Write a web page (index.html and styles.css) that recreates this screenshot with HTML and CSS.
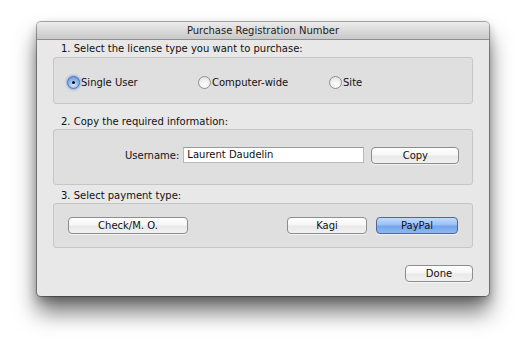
FILE: index.html
```html
<!DOCTYPE html>
<html>
<head>
<meta charset="utf-8">
<link rel="stylesheet" href="styles.css">
</head>
<body>
<div class="window">
  <div class="titlebar">Purchase Registration Number</div>
  <div class="content">
    <div class="label l1">1. Select the license type you want to purchase:</div>
    <div class="group g1">
      <div class="radio r-single"><span class="dot on"></span>Single User</div>
      <div class="radio r-comp"><span class="dot"></span>Computer-wide</div>
      <div class="radio r-site"><span class="dot"></span>Site</div>
    </div>
    <div class="label l2">2. Copy the required information:</div>
    <div class="group g2">
      <span class="ulabel">Username:</span>
      <div class="field">Laurent Daudelin</div>
      <div class="btn b-copy">Copy</div>
    </div>
    <div class="label l3">3. Select payment type:</div>
    <div class="group g3">
      <div class="btn b-check">Check/M. O.</div>
      <div class="spacer"></div>
      <div class="btn b-kagi">Kagi</div>
      <div class="btn b-paypal default">PayPal</div>
    </div>
    <div class="footer">
      <div class="btn b-done">Done</div>
    </div>
  </div>
</div>
</body>
</html>
```
FILE: styles.css
```css
html, body {
  margin: 0;
  padding: 0;
  background: #ffffff;
}
body {
  min-height: 342px;
  padding-top: 22px;
  box-sizing: border-box;
  font-family: "DejaVu Sans", "Liberation Sans", sans-serif;
  font-size: 10px;
  color: #111;
}
.window {
  margin: 0 0 0 37px;
  width: 452px;
  height: 274px;
  background: #e8e8e8;
  border-radius: 4px;
  box-shadow: 0 0 0 1px rgba(0,0,0,0.32), 0 16px 22px rgba(0,0,0,0.55), 0 4px 10px rgba(0,0,0,0.25);
  overflow: hidden;
}
.titlebar {
  height: 17px;
  line-height: 18px;
  text-align: center;
  color: #1e1e1e;
  background: linear-gradient(#ececec, #d6d6d6 60%, #c9c9c9);
  border-bottom: 1px solid #8f8f8f;
}
.content {
  padding: 0 16px 0 16px;
}
.label {
  padding-left: 8px;
  height: 14px;
  line-height: 14px;
}
.l1 { margin-top: 2px; }
.l2 { margin-top: 11px; }
.l3 { margin-top: 4px; }
.group {
  background: #dfdfdf;
  border: 1px solid #c6c6c6;
  border-radius: 3px;
  display: flex;
  align-items: center;
  box-sizing: border-box;
}
.g1 {
  height: 47px;
  padding-left: 13px;
  padding-top: 4px;
  margin-top: 1px;
}
.g2 {
  height: 56px;
  margin-top: 0;
  padding-left: 71px;
  padding-bottom: 4px;
}
.g3 {
  height: 45px;
  margin-top: 0;
  padding-left: 14px;
}
.radio {
  display: flex;
  align-items: center;
  gap: 1px;
}
.r-single { width: 131px; }
.r-comp { width: 131px; }
.dot {
  width: 13px;
  height: 13px;
  border-radius: 50%;
  box-sizing: border-box;
  border: 1px solid #8e8e8e;
  background: radial-gradient(circle at 50% 75%, #ffffff 0%, #f4f4f4 40%, #dcdcdc 100%);
  position: relative;
}
.dot.on {
  border-color: #4f6fa6;
  background: radial-gradient(circle at 50% 70%, #d4e6fb 0%, #90b7ec 50%, #5a8fd8 100%);
  box-shadow: 0 0 2px 1px rgba(90,140,220,0.55);
}
.dot.on::after {
  content: "";
  position: absolute;
  left: 4px;
  top: 4px;
  width: 3px;
  height: 3px;
  border-radius: 50%;
  background: #111;
}
.ulabel {
  margin-right: 4px;
}
.field {
  width: 181px;
  height: 16px;
  box-sizing: border-box;
  background: #ffffff;
  border: 1px solid #b9b9b9;
  border-top-color: #9a9a9a;
  padding-left: 3px;
  line-height: 14px;
  margin-right: 7px;
}
.btn {
  height: 17px;
  box-sizing: border-box;
  border: 1px solid #8d8d8d;
  border-radius: 4px;
  background: linear-gradient(#ffffff, #f6f6f6 45%, #e9e9e9 55%, #f1f1f1);
  text-align: center;
  line-height: 15px;
  box-shadow: 0 1px 0 rgba(255,255,255,0.6);
}
.b-copy { width: 88px; }
.b-check { width: 120px; }
.spacer { flex: 1; }
.b-kagi { width: 80px; margin-right: 9px; }
.b-paypal { width: 82px; margin-right: 14px; }
.default {
  border-color: #4d6797;
  background: linear-gradient(#c3dbf8, #9bc0f2 45%, #74a4ea 55%, #8fb8f2);
}
.footer {
  display: flex;
  justify-content: flex-end;
  margin-top: 17px;
}
.b-done { width: 68px; }
```
